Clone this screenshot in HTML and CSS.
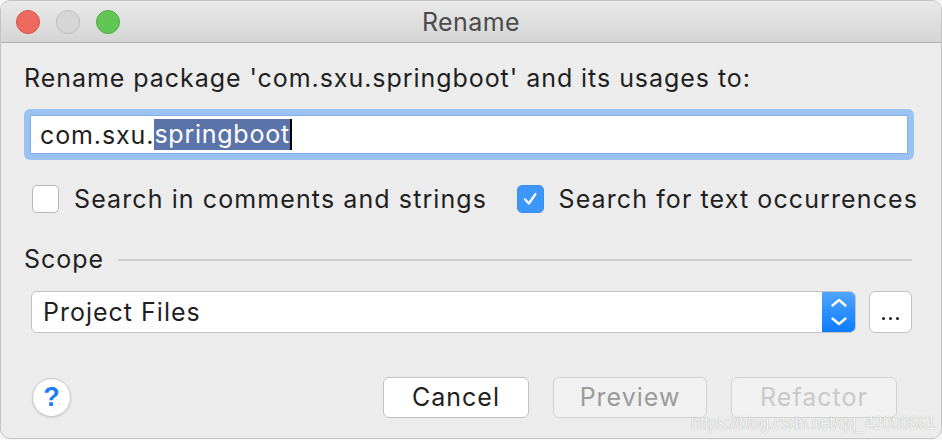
FILE: index.html
```html
<!DOCTYPE html>
<html>
<head>
<meta charset="utf-8">
<link rel="stylesheet" href="styles.css">
</head>
<body>
<div class="window">
  <div class="titlebar">
    <div class="lights">
      <span class="light red"></span>
      <span class="light gray"></span>
      <span class="light green"></span>
    </div>
    <div class="title">Rename</div>
  </div>
  <div class="content">
    <div class="prompt">Rename package 'com.sxu.springboot' and its usages to:</div>
    <div class="field">
      <div class="input"><span class="plain">com.sxu.</span><span class="sel">springboot</span><span class="caret"></span></div>
    </div>
    <div class="checks">
      <div class="check">
        <span class="box"></span>
        <span class="clabel">Search in comments and strings</span>
      </div>
      <div class="check second">
        <span class="box on">
          <svg width="28" height="28" viewBox="0 0 28 28"><path d="M8 14.5 L12.2 19 L19.5 8.5" fill="none" stroke="#fff" stroke-width="2.6" stroke-linecap="round" stroke-linejoin="round"/></svg>
        </span>
        <span class="clabel">Search for text occurrences</span>
      </div>
    </div>
    <div class="scope">
      <span class="scope-label">Scope</span>
      <span class="rule"></span>
    </div>
    <div class="combo-row">
      <div class="combo">
        <span class="combo-text">Project Files</span>
        <span class="combo-arrow">
          <svg width="34" height="41" viewBox="0 0 34 41"><path d="M10.5 13.5 L17 8 L23.5 13.5" fill="none" stroke="#fff" stroke-width="2.4" stroke-linecap="round" stroke-linejoin="round"/><path d="M10.5 26.5 L17 32 L23.5 26.5" fill="none" stroke="#fff" stroke-width="2.4" stroke-linecap="round" stroke-linejoin="round"/></svg>
        </span>
      </div>
      <div class="dots"><span class="dot"></span><span class="dot"></span><span class="dot"></span></div>
    </div>
    <div class="bottom">
      <div class="help">?</div>
      <div class="buttons">
        <div class="btn cancel">Cancel</div>
        <div class="btn disabled preview">Preview</div>
        <div class="btn disabled refactor">Refactor</div>
      </div>
    </div>
  </div>
  <div class="watermark">https://blog.csdn.net/qq_42000661</div>
</div>
</body>
</html>
```

FILE: styles.css
```css
html, body {
  margin: 0;
  padding: 0;
  background: #f6f6f6;
}
body {
  width: 942px;
  height: 440px;
  overflow: hidden;
  font-family: Inter, "Noto Sans", "Liberation Sans", sans-serif;
  color: #1f1f1f;
}
.window {
  position: relative;
  width: 940px;
  height: 437px;
  background: #ececec;
  border: 1px solid #c4c4c4;
  border-radius: 10px;
  overflow: hidden;
}
.titlebar {
  position: relative;
  height: 41px;
  background: linear-gradient(#e9e9e9, #d5d5d5);
  border-bottom: 1px solid #b1b1b1;
  display: flex;
  align-items: center;
  justify-content: center;
}
.lights {
  position: absolute;
  left: 15px;
  top: 9px;
  display: flex;
  gap: 16px;
}
.light {
  width: 22px;
  height: 22px;
  border-radius: 50%;
  border: 1px solid;
}
.red { background: #ee6a5f; border-color: #d65448; }
.gray { background: #d6d6d6; border-color: #bdbdbd; }
.green { background: #62c655; border-color: #4ea740; }
.title {
  font-size: 25px;
  color: #4b4b4b;
  letter-spacing: 0.4px;
  margin-top: 1px;
}
.content {
  padding: 0 23px 0 23px;
  display: flex;
  flex-direction: column;
}
.prompt {
  font-size: 25px;
  line-height: 30px;
  height: 30px;
  margin-top: 20px;
  letter-spacing: 0.95px;
  white-space: nowrap;
}
.field {
  margin-top: 16px;
  height: 51px;
  box-sizing: border-box;
  background: #9ac2f2;
  border-radius: 6px;
  padding: 6px;
  margin-right: 4px;
}
.input {
  height: 39px;
  box-sizing: border-box;
  background: #fff;
  border: 1px solid #86aee4;
  display: flex;
  align-items: center;
  padding-left: 9px;
  font-size: 25px;
  letter-spacing: 0.9px;
  white-space: nowrap;
}
.sel {
  background: #5a74a9;
  color: #fff;
  line-height: 31px;
  height: 31px;
  letter-spacing: 0.75px;
}
.caret {
  width: 2px;
  height: 31px;
  background: #000;
}
.checks {
  margin-top: 25px;
  height: 28px;
  display: flex;
  align-items: center;
  padding-left: 8px;
}
.check {
  display: flex;
  align-items: center;
  gap: 15px;
}
.check.second {
  margin-left: auto;
}
.box {
  width: 27px;
  height: 28px;
  box-sizing: border-box;
  background: #fff;
  border: 1px solid #b8b8b8;
  border-radius: 5px;
  display: flex;
  align-items: center;
  justify-content: center;
}
.box.on {
  background: #3d96f9;
  border-color: #3a8ff0;
}
.box.on svg {
  display: block;
}
.clabel {
  font-size: 25px;
  letter-spacing: 1.1px;
  line-height: 28px;
  white-space: nowrap;
}
.scope {
  margin-top: 31px;
  height: 30px;
  display: flex;
  align-items: center;
  gap: 14px;
}
.scope-label {
  font-size: 25px;
  line-height: 30px;
  letter-spacing: 1px;
}
.rule {
  flex: 1;
  height: 2px;
  background: #cfcfcf;
  margin-top: 1px;
  margin-right: 6px;
}
.combo-row {
  margin-top: 17px;
  height: 42px;
  display: flex;
  align-items: center;
  padding-left: 7px;
}
.combo {
  width: 825px;
  height: 42px;
  box-sizing: border-box;
  background: #fff;
  border: 1px solid #c3c3c3;
  border-radius: 6px;
  display: flex;
  align-items: center;
  overflow: hidden;
}
.combo-text {
  flex: 1;
  padding-left: 11px;
  font-size: 25px;
  letter-spacing: 1px;
}
.combo-arrow {
  width: 34px;
  height: 42px;
  margin: -1px -1px -1px 0;
  background: linear-gradient(#52a6ff, #0a7aff);
  display: flex;
  align-items: center;
  justify-content: center;
}
.combo-arrow svg { display: block; }
.dots {
  margin-left: 13px;
  width: 43px;
  height: 42px;
  box-sizing: border-box;
  background: #fff;
  border: 1px solid #c3c3c3;
  border-radius: 6px;
  display: flex;
  align-items: flex-end;
  justify-content: center;
  gap: 4px;
  padding-bottom: 12px;
}
.dot {
  width: 3px;
  height: 3px;
  border-radius: 50%;
  background: #222;
}
.bottom {
  margin-top: 44px;
  height: 40px;
  display: flex;
  align-items: center;
  padding-left: 8px;
}
.help {
  width: 39px;
  height: 39px;
  box-sizing: border-box;
  border-radius: 50%;
  background: #fff;
  border: 1px solid #c8c8c8;
  box-shadow: 0 1px 2px rgba(0,0,0,0.12);
  color: #1a7df6;
  font-family: "Liberation Sans", sans-serif;
  font-weight: bold;
  font-size: 27px;
  display: flex;
  align-items: center;
  justify-content: center;
}
.buttons {
  margin-left: auto;
  margin-right: 21px;
  display: flex;
  gap: 24px;
}
.btn {
  height: 41px;
  box-sizing: border-box;
  border-radius: 6px;
  border: 1px solid #c2c2c2;
  background: #fff;
  font-size: 25px;
  letter-spacing: 1px;
  display: flex;
  align-items: center;
  justify-content: center;
}
.cancel { width: 146px; color: #1f1f1f; }
.preview { width: 154px; }
.refactor { width: 166px; }
.disabled {
  background: #f1f1f1;
  border-color: #d2d2d2;
}
.preview { color: #9b9b9b; }
.refactor { color: #c9c9c9; }
.watermark {
  position: absolute;
  left: 690px;
  top: 411px;
  font-family: "Liberation Sans", sans-serif;
  font-size: 19px;
  line-height: 22px;
  color: rgba(255,255,255,0.9);
  text-shadow: 0 0 1px rgba(110,110,110,0.7);
  transform: scaleX(0.84);
  transform-origin: left top;
  white-space: nowrap;
}
```
